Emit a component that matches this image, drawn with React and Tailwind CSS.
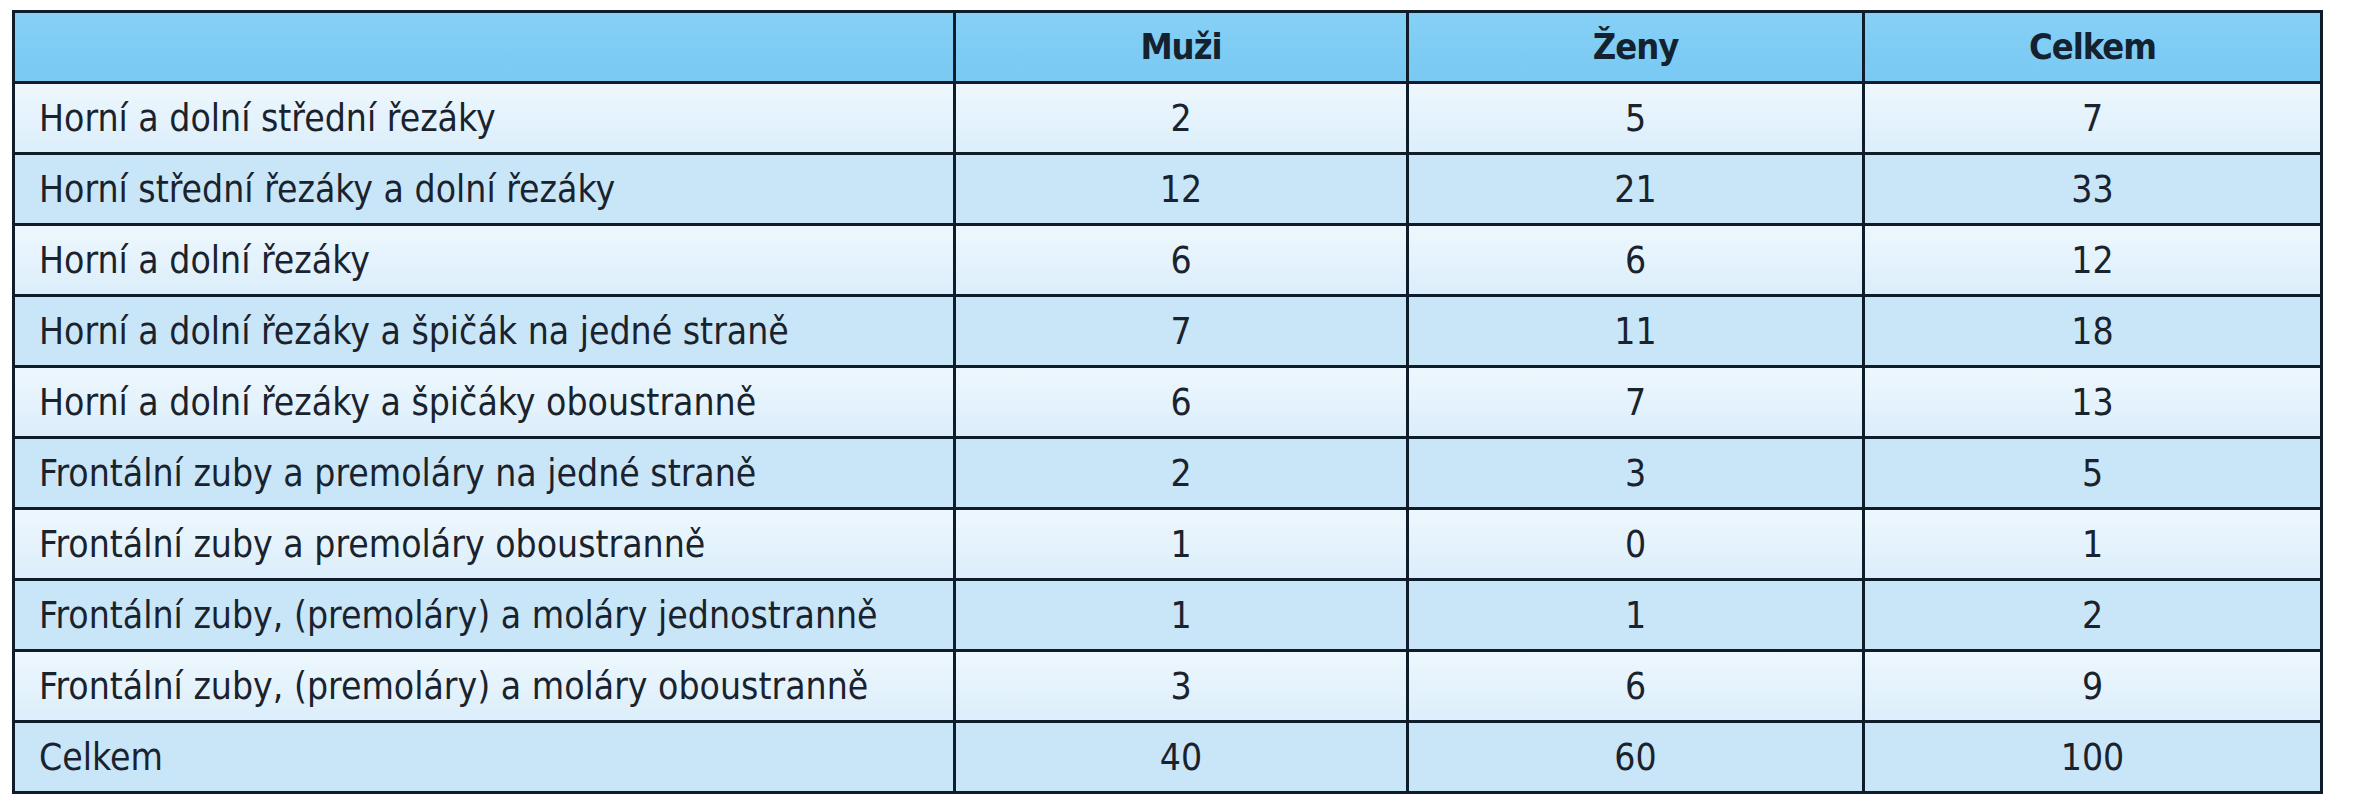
import React from 'react'

const rows = [
  ['Horní a dolní střední řezáky', 2, 5, 7],
  ['Horní střední řezáky a dolní řezáky', 12, 21, 33],
  ['Horní a dolní řezáky', 6, 6, 12],
  ['Horní a dolní řezáky a špičák na jedné straně', 7, 11, 18],
  ['Horní a dolní řezáky a špičáky oboustranně', 6, 7, 13],
  ['Frontální zuby a premoláry na jedné straně', 2, 3, 5],
  ['Frontální zuby a premoláry oboustranně', 1, 0, 1],
  ['Frontální zuby, (premoláry) a moláry jednostranně', 1, 1, 2],
  ['Frontální zuby, (premoláry) a moláry oboustranně', 3, 6, 9],
  ['Celkem', 40, 60, 100],
]

export default function App() {
  return (
    <div className="w-[2358px] h-[800px] bg-white pt-[10px] pl-[12px]">
      <table
        className="table-fixed border-collapse text-[#1a232d]"
        style={{ fontFamily: '"DejaVu Sans Condensed", "DejaVu Sans", sans-serif' }}
      >
        <colgroup>
          <col className="w-[941px]" />
          <col className="w-[453px]" />
          <col className="w-[456px]" />
          <col className="w-[458px]" />
        </colgroup>
        <thead>
          <tr className="h-[71px] bg-gradient-to-b from-[#86d0f6] to-[#78c9f3]">
            <th className="border-[3px] border-[#0f1c29]"></th>
            <th className="border-[3px] border-[#0f1c29] text-[36px] font-bold text-center tracking-[-1px] text-[#14212e]">Muži</th>
            <th className="border-[3px] border-[#0f1c29] text-[36px] font-bold text-center tracking-[-1px] text-[#14212e]">Ženy</th>
            <th className="border-[3px] border-[#0f1c29] text-[36px] font-bold text-center tracking-[-1px] text-[#14212e]">Celkem</th>
          </tr>
        </thead>
        <tbody>
          {rows.map((r, i) => (
            <tr
              key={i}
              className={
                i % 2 === 0
                  ? 'h-[71px] bg-gradient-to-b from-[#eef7fd] to-[#dbeefb]'
                  : 'h-[71px] bg-[#c9e6f8]'
              }
            >
              <td className="border-[3px] border-[#0f1c29] pl-[24px] text-[37px] leading-none">{r[0]}</td>
              <td className="border-[3px] border-[#0f1c29] text-center text-[37px] leading-none">{r[1]}</td>
              <td className="border-[3px] border-[#0f1c29] text-center text-[37px] leading-none">{r[2]}</td>
              <td className="border-[3px] border-[#0f1c29] text-center text-[37px] leading-none">{r[3]}</td>
            </tr>
          ))}
        </tbody>
      </table>
    </div>
  )
}
